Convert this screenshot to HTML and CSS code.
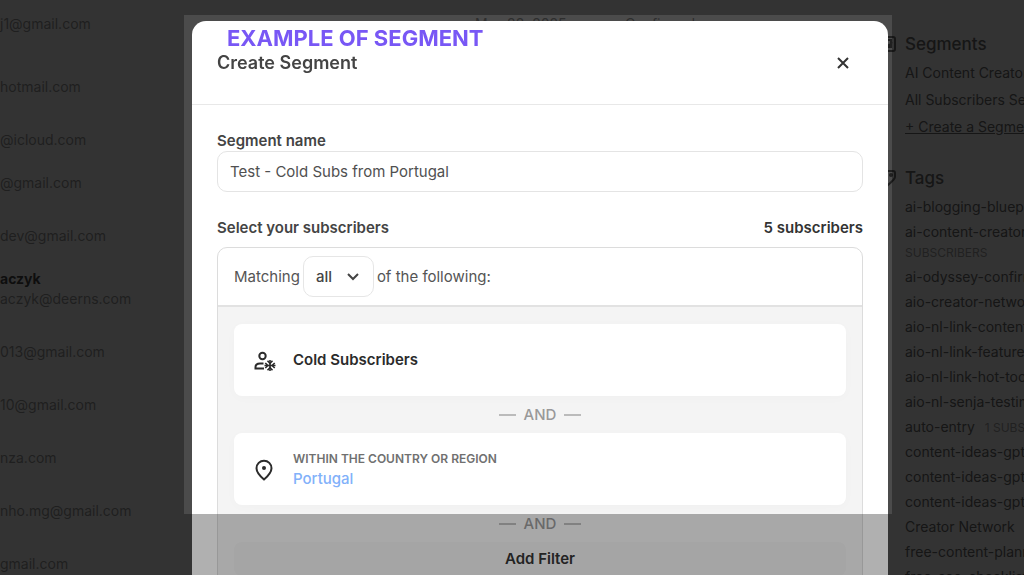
FILE: index.html
```html
<!DOCTYPE html>
<html lang="en">

<head>
    <meta charset="UTF-8">
    <title>Create Segment</title>
    <link rel="stylesheet" href="styles.css">
</head>

<body>
    <div id="page">
        <table class="subscribers">
            <tr>
                <td class="email">j1@gmail.com</td>
                <td class="date">May 22, 2025</td>
                <td>Confirmed</td>
            </tr>
            <tr class="named"><td class="email">hotmail.com</td></tr>
            <tr class="named"><td class="email">@icloud.com</td></tr>
            <tr><td class="email">@gmail.com</td></tr>
            <tr><td class="email">dev@gmail.com</td></tr>
            <tr><td class="email"><b>aczyk</b>aczyk@deerns.com</td></tr>
            <tr class="named"><td class="email">013@gmail.com</td></tr>
            <tr class="named"><td class="email">10@gmail.com</td></tr>
            <tr class="named"><td class="email">nza.com</td></tr>
            <tr class="named"><td class="email">nho.mg@gmail.com</td></tr>
            <tr class="named"><td class="email">gmail.com</td></tr>
        </table>

        <div class="side">
            <div class="group">
                <h3>
                    <svg width="18" height="18" viewBox="0 0 18 18"><rect x="2" y="2" width="14" height="14" rx="2"/><path d="M6 5h6v7H6zM8 9l2 2 3-4"/></svg>
                    Segments
                </h3>
                <ul class="segments">
                    <li>AI Content Creators</li>
                    <li>All Subscribers Segment</li>
                    <li><a href="#">+ Create a Segment</a></li>
                </ul>
            </div>
            <div class="group">
                <h3>
                    <svg width="18" height="18" viewBox="0 0 18 18"><path d="M2 8l6-6h6q2 0 2 2v4q0 2-7 8z"/><circle cx="12" cy="6" r="1"/></svg>
                    Tags
                </h3>
                <ul class="tags">
                    <li>ai-blogging-blueprint</li>
                    <li>ai-content-creators<small class="below">SUBSCRIBERS</small></li>
                    <li>ai-odyssey-confirmed</li>
                    <li>aio-creator-network</li>
                    <li>aio-nl-link-content</li>
                    <li>aio-nl-link-features</li>
                    <li>aio-nl-link-hot-tools</li>
                    <li>aio-nl-senja-testimonial</li>
                    <li>auto-entry <small>1 SUBSCRIBER</small></li>
                    <li>content-ideas-gpt</li>
                    <li>content-ideas-gpt</li>
                    <li>content-ideas-gpt</li>
                    <li>Creator Network</li>
                    <li>free-content-planner</li>
                    <li>free-seo-checklist</li>
                </ul>
            </div>
        </div>
    </div>

    <div id="layer">
        <div class="modal">
            <div class="head">
                <h2>Create Segment</h2>
                <button class="close" aria-label="Close">
                    <svg width="12" height="12" viewBox="0 0 12 12"><path d="M1 1l10 10M11 1L1 11"/></svg>
                </button>
                <span class="note">EXAMPLE OF SEGMENT</span>
            </div>
            <div class="body">
                <label for="name">Segment name</label>
                <input type="text" id="name" value="Test - Cold Subs from Portugal">

                <div class="line">
                    <span>Select your subscribers</span>
                    <span class="count">5 subscribers</span>
                </div>

                <div class="filters">
                    <div class="match">
                        <label for="match">Matching</label>
                        <span class="pick">
                            <select id="match">
                                <option>all</option>
                                <option>any</option>
                            </select>
                            <svg width="12" height="8" viewBox="0 0 12 8"><path d="M1 1l5 5 5-5"/></svg>
                        </span>
                        <span>of the following:</span>
                    </div>
                    <div class="list">
                        <div class="card">
                            <svg class="icon" width="24" height="24" viewBox="0 0 24 24">
                                <circle cx="10.5" cy="8" r="3.2"/>
                                <path d="M11.5 15.5H8q-4.5 0-4.5 3.5v1.5H12"/>
                                <g class="thin">
                                    <path d="M18 12v11M12.5 17.5h11"/>
                                    <path d="M15.5 12.8L18 15.3l2.5-2.5M15.5 22.2L18 19.7l2.5 2.5M13.3 15l2.5 2.5-2.5 2.5M22.7 15l-2.5 2.5 2.5 2.5"/>
                                </g>
                            </svg>
                            <strong>Cold Subscribers</strong>
                        </div>
                        <div class="and">AND</div>
                        <div class="card">
                            <svg class="icon" width="24" height="24" viewBox="0 0 24 24">
                                <path d="M12 22.5C8 19 4.5 15.500 4.5 11.2a7.5 7.5 0 0 1 15 0C19.5 15.5 16 19 12 22.5z"/>
                                <circle class="dot" cx="12" cy="11" r="2"/>
                            </svg>
                            <div>
                                <p>WITHIN THE COUNTRY OR REGION</p>
                                <a href="#">Portugal</a>
                            </div>
                        </div>
                        <div class="and">AND</div>
                        <button class="add">Add Filter</button>
                    </div>
                </div>
            </div>
        </div>
    </div>

    <div id="spotlight"></div>
</body>

</html>
```

FILE: styles.css
```css
* {
    margin: 0;
    padding: 0;
    box-sizing: border-box;
}

body {
    height: 100vh;
    overflow: hidden;
    background-color: #4b4b4b;
    font-family: Inter, "Liberation Sans", sans-serif;
    font-size: 15px;
    line-height: 20px;
    color: #444;
}

svg {
    fill: none;
    stroke: currentColor;
    stroke-width: 2;
    flex: none;
}

ul {
    list-style: none;
}

/* page behind the dialog */
#page {
    display: flex;
    justify-content: space-between;
    height: 100vh;
    overflow: hidden;
    font-size: 14px;
    color: #2e2e2e;
    white-space: nowrap;
}

.subscribers {
    border-collapse: collapse;
    align-self: flex-start;
    margin-top: -3px;
}

.subscribers tr {
    height: 53px;
}

.subscribers .named td {
    padding-top: 20px;
}

.subscribers .email {
    width: 475px;
}

.subscribers .date {
    width: 150px;
}

.subscribers b {
    display: block;
    color: #151515;
}

.side {
    width: 144px;
    padding-top: 32px;
    color: #202020;
}

.side h3 {
    display: flex;
    align-items: center;
    gap: 8px;
    margin-left: -1px;
    font-size: 17px;
    font-weight: 500;
    line-height: 24px;
}

.side ul {
    margin-left: 25px;
}

.side a {
    color: inherit;
}

.side small {
    font-size: 12px;
    line-height: 12px;
    margin-left: 6px;
    color: #303030;
}

.side .below {
    display: block;
    margin: 0;
    padding: 3px 0 5px;
}

.segments {
    margin-bottom: 26px;
    padding-top: 3px;
}

.segments li {
    line-height: 27px;
}

.tags {
    padding-top: 4px;
}

.tags li {
    line-height: 25px;
}

/* dialog */
#layer {
    position: fixed;
    inset: 0;
    padding: 21px 136px 0 192px;
}

.modal {
    background-color: #fff;
    border-radius: 14px 14px 0 0;
}

.head {
    position: relative;
    display: flex;
    align-items: center;
    justify-content: space-between;
    height: 84px;
    padding: 0 25px;
    border-bottom: 1px solid #e8e8e8;
}

.head h2 {
    font-size: 18px;
    font-weight: 600;
}

.note {
    position: absolute;
    top: 3px;
    left: 35px;
    font-size: 22px;
    font-weight: 700;
    line-height: 28px;
    color: #7857f5;
}

.close {
    display: flex;
    padding: 14px;
    border: none;
    background: none;
    color: #333;
}

.body {
    padding: 26px 25px 0;
}

.body > label,
.line {
    display: block;
    font-weight: 600;
}

#name {
    display: block;
    width: 100%;
    height: 41px;
    padding: 0 12px;
    border: 1px solid #e4e4e4;
    border-radius: 10px;
    font: inherit;
    color: #505050;
}

.line {
    display: flex;
    justify-content: space-between;
    margin: 26px 0 9px;
}

.count {
    color: #333;
}

.filters {
    border: 1px solid #dcdcdc;
    border-radius: 10px 10px 0 0;
}

.match {
    display: flex;
    align-items: center;
    gap: 3px;
    height: 59px;
    padding: 0 16px;
    border-bottom: 2px solid #e2e2e2;
    color: #555;
}

.pick {
    position: relative;
    color: #444;
}

.pick select {
    display: block;
    width: 71px;
    height: 41px;
    padding-left: 12px;
    appearance: none;
    border: 1px solid #e6e6e6;
    border-radius: 10px;
    background-color: #fff;
    font: inherit;
    font-weight: 500;
    color: inherit;
}

.pick svg {
    position: absolute;
    top: 17px;
    right: 15px;
}

.list {
    padding: 17px 16px;
    background-color: #f4f4f4;
}

.card {
    display: flex;
    align-items: center;
    gap: 17px;
    height: 72px;
    padding: 0 18px;
    border-radius: 8px;
    background-color: #fff;
    box-shadow: 0 2px 12px rgba(0, 0, 0, .02);
    color: #2b2b2b;
}

.card strong {
    font-weight: 600;
}

.card .thin {
    stroke-width: 1.6;
}

.card .dot {
    fill: currentColor;
    stroke: none;
}

.card p {
    font-size: 12px;
    font-weight: 600;
    color: #707070;
}

.card a {
    font-weight: 500;
    color: #82b1fa;
    text-decoration: none;
}

.and {
    display: flex;
    align-items: center;
    justify-content: center;
    gap: 8px;
    height: 37px;
    font-weight: 500;
    color: #999;
}

.and::before,
.and::after {
    content: "";
    width: 17px;
    border-top: 2px solid #bbb;
}

.add {
    width: 100%;
    height: 34px;
    border: none;
    border-radius: 8px;
    background-color: #efefef;
    font: inherit;
    font-weight: 600;
    color: #333;
}

/* darkens everything outside the highlighted area */
#spotlight {
    position: fixed;
    top: 15px;
    right: 132px;
    bottom: 61px;
    left: 184px;
    box-shadow: 0 0 0 200vw rgba(0, 0, 0, .31);
    pointer-events: none;
}
```
